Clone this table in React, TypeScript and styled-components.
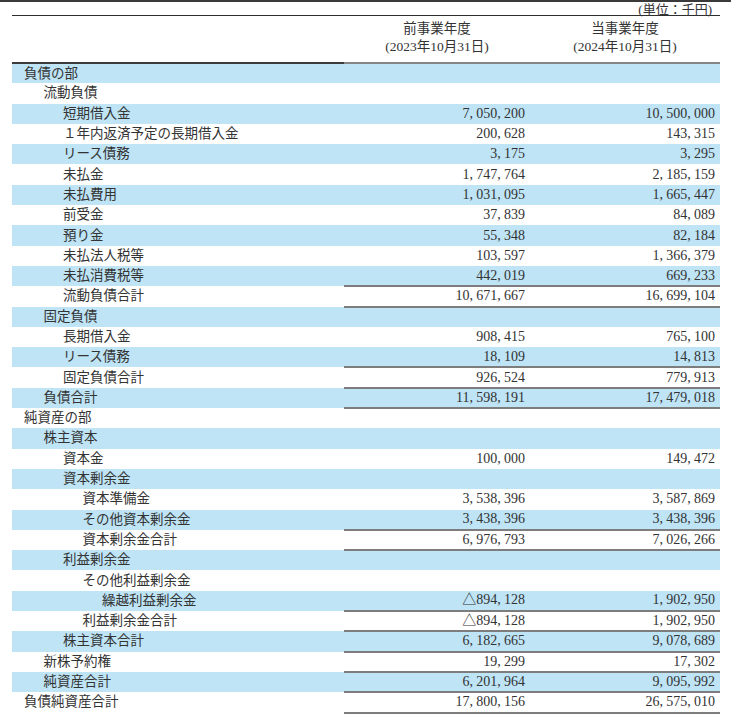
import styled, { createGlobalStyle } from 'styled-components';

interface Row {
  label: string;
  level: number;
  prev?: string;
  curr?: string;
  total?: boolean;
}

const rows: Row[] = [
  { label: '負債の部', level: 0 },
  { label: '流動負債', level: 1 },
  { label: '短期借入金', level: 2, prev: '7,050,200', curr: '10,500,000' },
  { label: '１年内返済予定の長期借入金', level: 2, prev: '200,628', curr: '143,315' },
  { label: 'リース債務', level: 2, prev: '3,175', curr: '3,295' },
  { label: '未払金', level: 2, prev: '1,747,764', curr: '2,185,159' },
  { label: '未払費用', level: 2, prev: '1,031,095', curr: '1,665,447' },
  { label: '前受金', level: 2, prev: '37,839', curr: '84,089' },
  { label: '預り金', level: 2, prev: '55,348', curr: '82,184' },
  { label: '未払法人税等', level: 2, prev: '103,597', curr: '1,366,379' },
  { label: '未払消費税等', level: 2, prev: '442,019', curr: '669,233' },
  { label: '流動負債合計', level: 2, prev: '10,671,667', curr: '16,699,104', total: true },
  { label: '固定負債', level: 1 },
  { label: '長期借入金', level: 2, prev: '908,415', curr: '765,100' },
  { label: 'リース債務', level: 2, prev: '18,109', curr: '14,813' },
  { label: '固定負債合計', level: 2, prev: '926,524', curr: '779,913', total: true },
  { label: '負債合計', level: 1, prev: '11,598,191', curr: '17,479,018', total: true },
  { label: '純資産の部', level: 0 },
  { label: '株主資本', level: 1 },
  { label: '資本金', level: 2, prev: '100,000', curr: '149,472' },
  { label: '資本剰余金', level: 2 },
  { label: '資本準備金', level: 3, prev: '3,538,396', curr: '3,587,869' },
  { label: 'その他資本剰余金', level: 3, prev: '3,438,396', curr: '3,438,396' },
  { label: '資本剰余金合計', level: 3, prev: '6,976,793', curr: '7,026,266', total: true },
  { label: '利益剰余金', level: 2 },
  { label: 'その他利益剰余金', level: 3 },
  { label: '繰越利益剰余金', level: 4, prev: '△894,128', curr: '1,902,950' },
  { label: '利益剰余金合計', level: 3, prev: '△894,128', curr: '1,902,950', total: true },
  { label: '株主資本合計', level: 2, prev: '6,182,665', curr: '9,078,689', total: true },
  { label: '新株予約権', level: 1, prev: '19,299', curr: '17,302' },
  { label: '純資産合計', level: 1, prev: '6,201,964', curr: '9,095,992', total: true },
  { label: '負債純資産合計', level: 0, prev: '17,800,156', curr: '26,575,010', total: true },
];

// commas take a half-width cell, like the Mincho font in the filing
const Amount = ({ value }: { value?: string }) => {
  if (!value) return null;
  const parts = value.split(',');
  return (
    <>
      {parts.map((part, i) => (
        <span key={i}>
          {part}
          {i < parts.length - 1 && <Sep>,</Sep>}
        </span>
      ))}
    </>
  );
};

const App = () => {
  return (
    <Page>
      <GlobalStyle />
      <TopBar />
      <Sheet>
        <Unit>(単位：千円)</Unit>
        <Table>
          <colgroup>
            <col style={{ width: 332 }} />
            <col style={{ width: 186 }} />
            <col style={{ width: 190 }} />
          </colgroup>
          <thead>
            <tr>
              <HeadLabel />
              <HeadCell>
                前事業年度
                <br />
                (2023年10月31日)
              </HeadCell>
              <HeadCell>
                当事業年度
                <br />
                (2024年10月31日)
              </HeadCell>
            </tr>
          </thead>
          <tbody>
            {rows.map((row, i) => (
              <BodyRow key={i} $shaded={i % 2 === 0}>
                <Label $level={row.level}>{row.label}</Label>
                <Value $total={row.total}>
                  <Amount value={row.prev} />
                </Value>
                <Value $total={row.total}>
                  <Amount value={row.curr} />
                </Value>
              </BodyRow>
            ))}
          </tbody>
        </Table>
      </Sheet>
    </Page>
  );
};

const GlobalStyle = createGlobalStyle`
  body {
    margin: 0;
    background: #fff;
  }
`;

const Page = styled.div`
  width: 731px;
  font-family: 'Liberation Serif', 'Noto Sans CJK JP', serif;
  font-size: 13.5px;
  color: #333;
`;

const TopBar = styled.div`
  height: 2px;
  background: #3a3a3a;
`;

const Sheet = styled.div`
  padding: 0 11px 0 12px;
`;

const Unit = styled.div`
  height: 12px;
  padding-top: 1px;
  line-height: 13px;
  padding-right: 8px;
  font-size: 13px;
  text-align: right;
  border-bottom: 1.5px solid #2e2e2e;
`;

const Table = styled.table`
  width: 708px;
  table-layout: fixed;
  border-collapse: collapse;
`;

const HeadLabel = styled.th`
  padding: 0;
  border-bottom: 2px solid #3c3c3c;
`;

const HeadCell = styled.th`
  padding: 4px 0 6px;
  line-height: 18px;
  font-weight: normal;
  text-align: center;
  border-bottom: 2px solid #858585;
`;

const BodyRow = styled.tr<{ $shaded: boolean }>`
  height: 20.3px;
  background: ${({ $shaded }) => ($shaded ? '#bee4f6' : '#fff')};
`;

const Label = styled.td<{ $level: number }>`
  padding: 0 0 0 ${({ $level }) => 12 + $level * 19.5}px;
  line-height: 18px;
  white-space: nowrap;
`;

const Value = styled.td<{ $total?: boolean }>`
  padding: 0 5px 0 0;
  line-height: 18px;
  font-size: 14px;
  text-align: right;
  white-space: nowrap;
  border-top: ${({ $total }) => ($total ? '2px solid #7d7d7d' : 'none')};
  border-bottom: ${({ $total }) => ($total ? '2px solid #7d7d7d' : 'none')};
`;

const Sep = styled.span`
  display: inline-block;
  width: 0.48em;
  text-align: left;
`;

export default App;
